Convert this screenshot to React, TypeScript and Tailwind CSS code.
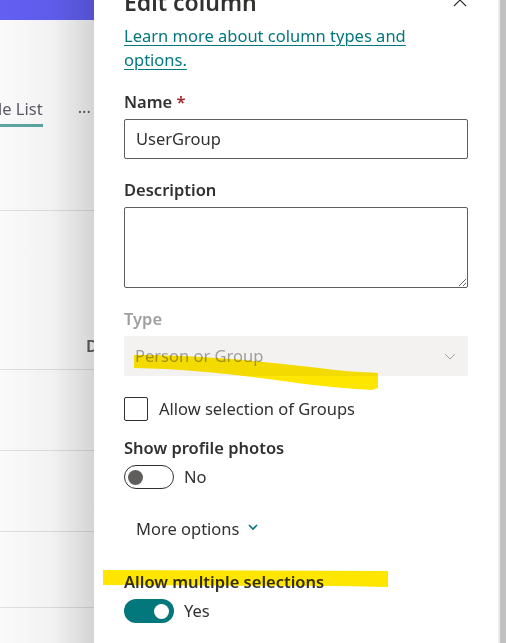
import React from "react";

const font = { fontFamily: '"Noto Sans", "Open Sans", sans-serif' };

function Toggle({ on }: { on: boolean }) {
  return on ? (
    <div className="w-[50px] h-[24px] rounded-full bg-[#03787c] flex items-center justify-end pr-[5px]">
      <div className="w-[15px] h-[15px] rounded-full bg-white" />
    </div>
  ) : (
    <div className="w-[50px] h-[24px] rounded-full border border-[#323130] bg-white flex items-center pl-[3px]">
      <div className="w-[15px] h-[15px] rounded-full bg-[#605e5c]" />
    </div>
  );
}

export default function App() {
  return (
    <div className="relative w-[506px] h-[643px] overflow-hidden flex bg-white text-[#323130]" style={font}>
      {/* left background page */}
      <div className="relative w-[94px] shrink-0 overflow-hidden bg-white">
        <div className="h-[20px] bg-[#6461f7]" />
        <div className="h-[107px] flex items-end">
          <div className="pb-[3px] border-b-[3px] border-[#5ea9a7] text-[16.5px] leading-[24px] text-[#5f5d6b] whitespace-nowrap -ml-[2px]">
            le List
          </div>
          <div className="ml-[35px] mb-[8px] text-[16.5px] leading-[24px] text-[#5f5d6b]">...</div>
        </div>
        <div className="h-[84px] border-b border-[#e3e3e3]" />
        <div className="h-[159px] border-b border-[#e3e3e3] relative">
          <div className="absolute left-[86px] top-[123px] text-[16.5px] font-semibold leading-[24px] text-[#605e5c]">D</div>
        </div>
        <div className="h-[81px] border-b border-[#e3e3e3]" />
        <div className="h-[81px] border-b border-[#e3e3e3]" />
        <div className="h-[76px] border-b border-[#e3e3e3]" />
        <div className="pointer-events-none absolute inset-0 bg-[linear-gradient(to_right,rgba(0,0,0,0.02)_0%,rgba(0,0,0,0.05)_55%,rgba(0,0,0,0.17)_100%)]" />
      </div>

      {/* panel */}
      <div className="relative w-[404px] shrink-0 bg-white px-[30px]">
        <div className="relative -mt-[14px] h-[32px] flex items-center">
          <div className="text-[23px] font-semibold leading-[32px] text-[#323130]">Edit column</div>
          <svg className="absolute right-[0px] top-[6px]" width="16" height="16" viewBox="0 0 16 16">
            <path d="M2 2 L14 14 M14 2 L2 14" stroke="#323130" strokeWidth="1.2" />
          </svg>
        </div>
        <div className="mt-[6px] text-[16.5px] leading-[24px] text-[#03787c] underline underline-offset-[3px] decoration-1 w-[300px]">
          Learn more about column types and options.
        </div>

        <div className="mt-[18px] text-[16.5px] font-semibold leading-[24px]">
          Name <span className="text-[#a4262c]">*</span>
        </div>
        <div className="mt-[5px] h-[40px] rounded-[2px] border border-[#605e5c] flex items-center px-[11px] text-[16.5px]">
          UserGroup
        </div>

        <div className="mt-[19px] text-[16.5px] font-semibold leading-[24px]">Description</div>
        <textarea className="mt-[5px] block w-full h-[81px] rounded-[2px] border border-[#605e5c] bg-white" />

        <div className="mt-[19px] text-[16.5px] font-semibold leading-[24px] text-[#a19f9d]">Type</div>
        <div className="mt-[5px] h-[40px] rounded-[2px] bg-[#f3f2f1] flex items-center justify-between px-[11px] text-[16.5px] text-[#a19f9d]">
          <span>Person or Group</span>
          <svg width="14" height="14" viewBox="0 0 14 14">
            <path d="M2 5 L7 10 L12 5" fill="none" stroke="#a19f9d" strokeWidth="1" />
          </svg>
        </div>

        <div className="mt-[21px] flex items-center h-[24px]">
          <div className="w-[24px] h-[24px] rounded-[2px] border border-[#323130]" />
          <span className="ml-[11px] text-[16.5px]">Allow selection of Groups</span>
        </div>

        <div className="mt-[15px] text-[16.5px] font-semibold leading-[24px]">Show profile photos</div>
        <div className="mt-[5px] flex items-center">
          <Toggle on={false} />
          <span className="ml-[10px] text-[16.5px]">No</span>
        </div>

        <div className="mt-[27px] ml-[12px] flex items-center text-[16.5px] leading-[24px]">
          <span>More options</span>
          <svg className="ml-[8px] mt-[-4px]" width="12" height="12" viewBox="0 0 12 12">
            <path d="M2 4 L6 8 L10 4" fill="none" stroke="#03787c" strokeWidth="1.6" />
          </svg>
        </div>

        <div className="mt-[29px] text-[16.5px] font-semibold leading-[24px]">Allow multiple selections</div>
        <div className="mt-[5px] flex items-center">
          <Toggle on={true} />
          <span className="ml-[10px] text-[16.5px]">Yes</span>
        </div>
      </div>

      {/* scrollbar */}
      <div className="w-[2px] shrink-0 bg-[#ececec]" />
      <div className="w-[6px] shrink-0 bg-[#c1c1c1]" />

      {/* highlighter strokes */}
      <svg className="pointer-events-none absolute inset-0 mix-blend-multiply" width="506" height="643" viewBox="0 0 506 643">
        <path
          d="M134,355 C200,355 260,361 310,367 C340,371 360,372 378,373 L378,388 L372,390 C340,388 320,386 290,382 C240,375 190,369 134,368 Z"
          fill="#ffe600"
        />
        <path d="M103,570 L388,571 L388,587 L340,586 L103,585 Z" fill="#ffe600" />
      </svg>
    </div>
  );
}
